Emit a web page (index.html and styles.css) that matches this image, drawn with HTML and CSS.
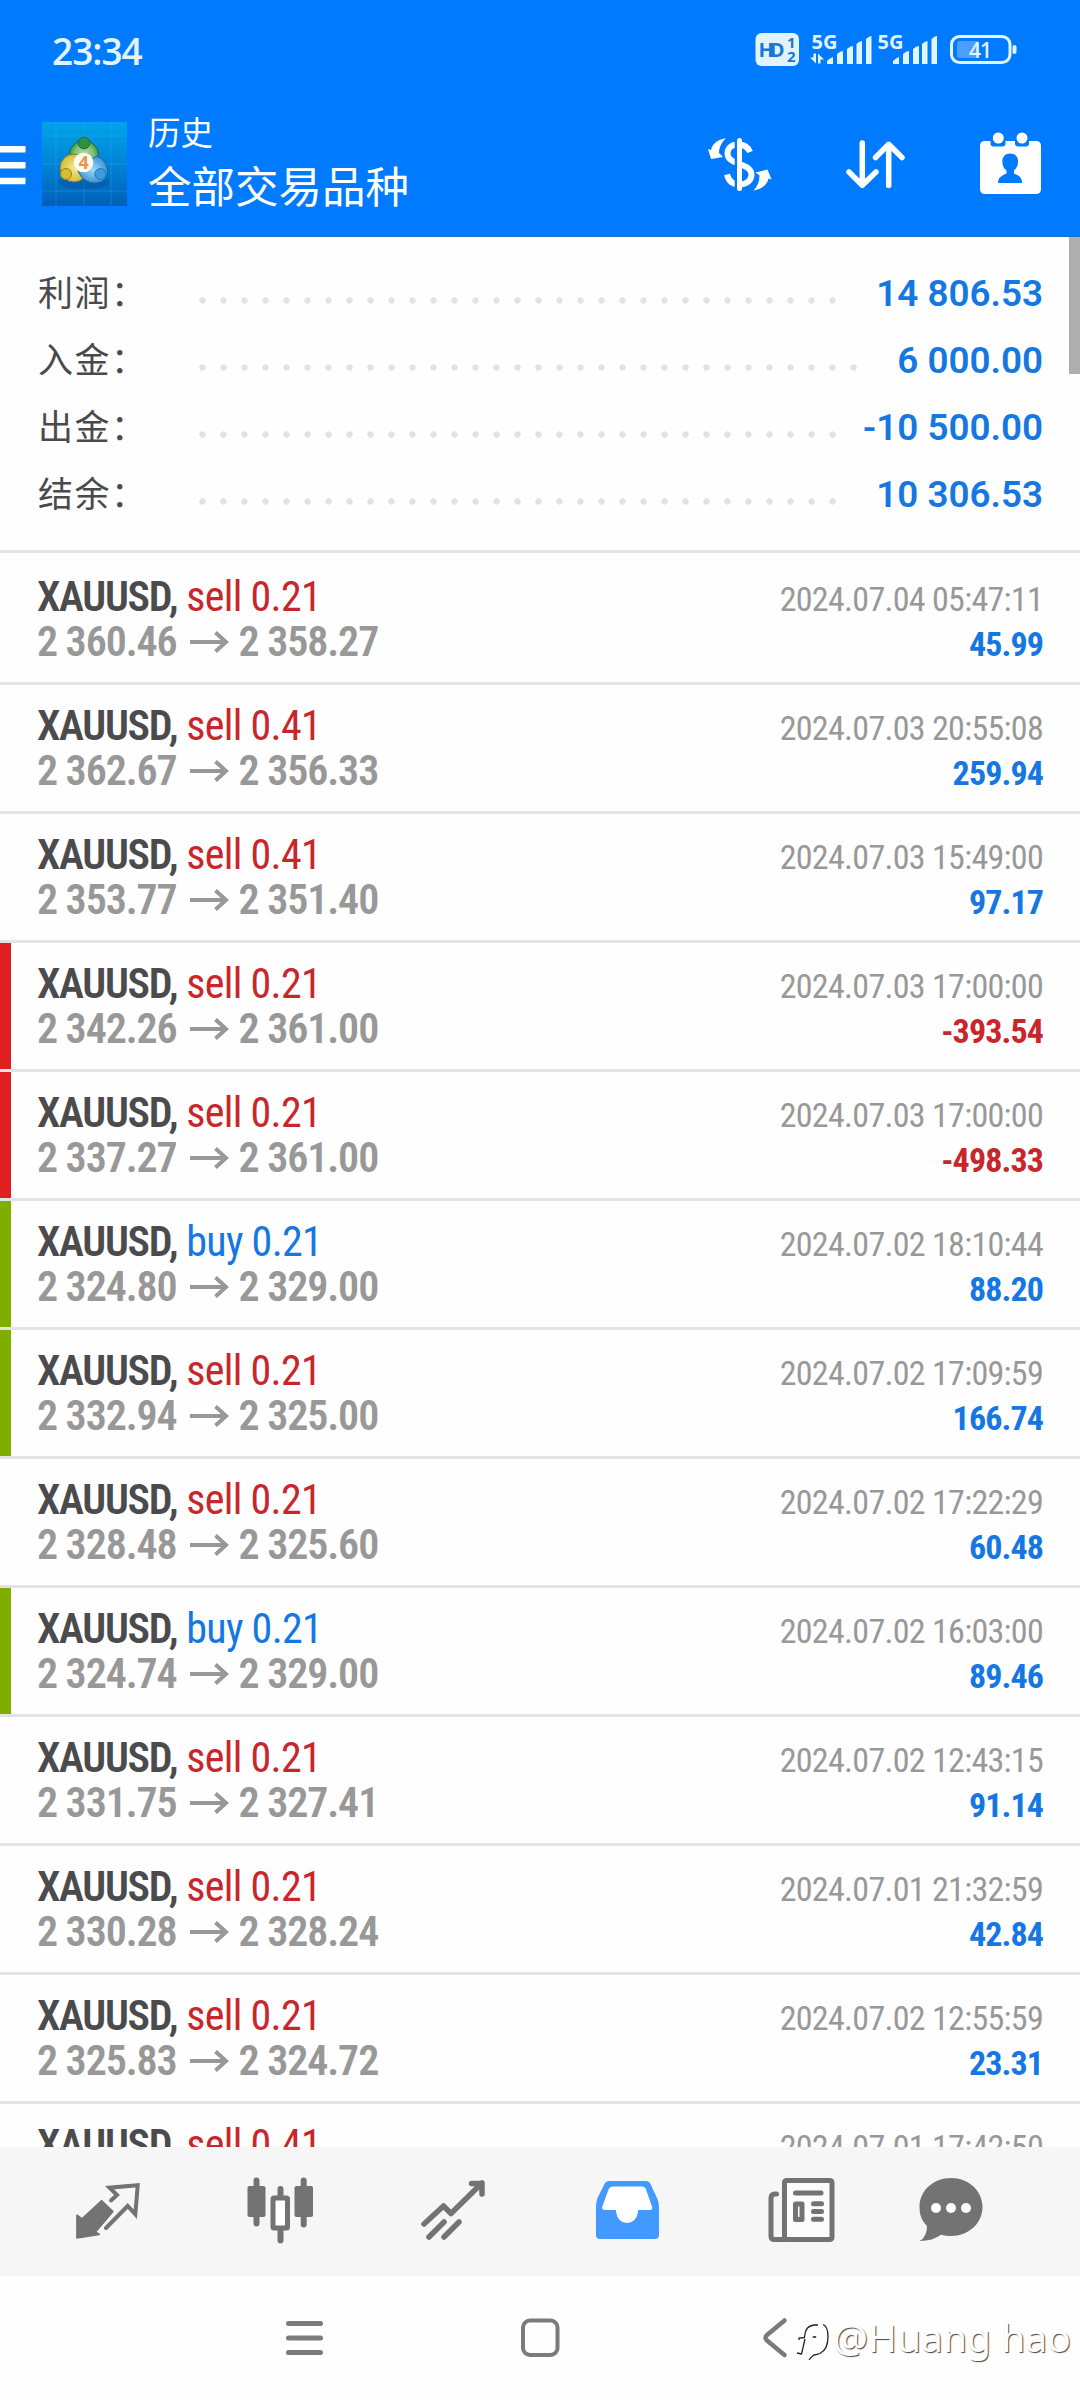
FILE: index.html
```html
<!DOCTYPE html>
<html lang="zh-CN">
<head>
<meta charset="utf-8">
<title>历史</title>
<link rel="stylesheet" href="styles.css">
</head>
<body>
<div class="screen">
  <header class="header">
    <div class="status">
      <span class="clock">23:34</span>
      <svg class="status-icons" viewBox="750 20 270 60" width="270" height="60">
        <rect x="755.5" y="33" width="43.5" height="33" rx="6" fill="#e2f2ff"/>
        <text x="758.500" y="56.500" class="hd" textLength="26">HD</text>
        <text x="787" y="48" class="hd-small">1</text>
        <text x="787" y="62" class="hd-small">2</text>
        <g fill="#e2f4ff">
          <text x="811.500" y="48.500" class="net" textLength="26">5G</text>
          <path d="M810 57.500h3.500V53.500h2.500v10zM818 63.500V53.500l6 6h-3.500v4z"/>
          <path d="M827 64v-3q3-3 6-4v7zM837 64V54q3-3 6-3v13zM847 64V49q3-3 6-3v18zM856.500 64V44q3-3 5.500-3v23zM866 64V39q3-3 5.500-3v28z"/>
          <text x="877.500" y="48.500" class="net" textLength="26">5G</text>
          <path d="M893 64v-3q3-3 6-4v7zM903 64V54q3-3 6-3v13zM913 64V49q3-3 6-3v18zM922 64V44q3-3 5.500-3v23zM931.500 64V39q3-3 5.500-3v28z"/>
          <rect x="1012.500" y="45" width="4" height="9" rx="2"/>
        </g>
        <rect x="951.500" y="36.500" width="58.500" height="26" rx="8" fill="none" stroke="#e2f4ff" stroke-width="3"/>
        <rect x="957" y="41" width="22" height="17" rx="3" fill="#4d9fff"/>
        <text x="969" y="58" class="batt">41</text>
      </svg>
    </div>
    <div class="appbar">
      <svg viewBox="0 122 42 84" width="42" height="84"><path d="M0 149.300h25.500M0 165.200h25.500M0 181h25.500" stroke="#fff" stroke-width="6.500"/></svg>
      <svg viewBox="42 122 85 84" width="85" height="84">
        <defs>
          <linearGradient id="bg" x1="0" y1="0" x2="0" y2="1"><stop offset="0" stop-color="#00a3e8"/><stop offset=".5" stop-color="#0084d6"/><stop offset="1" stop-color="#005fb8"/></linearGradient>
          <radialGradient id="green"><stop offset="0" stop-color="#b8e0a0"/><stop offset=".7" stop-color="#7cbc70"/><stop offset="1" stop-color="#3f9648"/></radialGradient>
          <radialGradient id="yellow"><stop offset="0" stop-color="#f4e88a"/><stop offset="1" stop-color="#d3bd38"/></radialGradient>
          <radialGradient id="blue"><stop offset="0" stop-color="#9fd8f8"/><stop offset="1" stop-color="#3a94d8"/></radialGradient>
        </defs>
        <rect x="42" y="122" width="85" height="84" fill="url(#bg)"/>
        <path d="M42 136h85M42 164h85M42 191h85M56 122v84M84 122v84M111 122v84" stroke="#48b6ee" stroke-opacity=".28" fill="none"/>
        <ellipse cx="84" cy="182" rx="26" ry="7" fill="#00407c" opacity=".3"/>
        <circle cx="84" cy="155" r="14.500" fill="url(#green)" stroke="#2c6a40"/>
        <circle cx="74" cy="168" r="14" fill="url(#yellow)" stroke="#7c7830"/>
        <path d="M97 156c6 2 11 9 10.500 17-1 8-8 10.500-14 10-9-1-15-7-16-16z" fill="url(#blue)" stroke="#205f9c"/>
        <circle cx="84" cy="143" r="5.800" fill="#2c9142" stroke="#1f6c35"/>
        <circle cx="66" cy="174" r="5.500" fill="#d8bd32" stroke="#9a8420"/>
        <circle cx="100.500" cy="174" r="5.500" fill="#3d9be0" stroke="#2272b8"/>
        <circle cx="83.500" cy="162.500" r="9.800" fill="#fbfbf8"/>
        <text x="78.500" y="169" class="logo-number">4</text>
      </svg>
      <div class="titles"><div class="title">历史</div><div class="subtitle">全部交易品种</div></div>
      <div class="actions">
        <svg viewBox="700 130 80 66" width="80" height="66">
          <path d="M750 151c-2-5-6-7.500-12-7.500-7 0-10.500 4-10.500 9 0 12 24 9 24 21 0 6-5 10-12 10s-11-4-12.500-10" fill="none" stroke="#fff" stroke-width="6"/>
          <path d="M738.200 136v56" stroke="#007aff" stroke-width="7"/><path d="M739.500 139.500v48" stroke="#fff" stroke-width="5" stroke-linecap="round"/>
          <path d="M726 137c-10 2-14 7-15 12l-3-1 3 10 12-2-4-4c0-6 3-11 7-15zM753.500 189.500c10-2 14-7 15-12l3 1-4-10-12 3 4 3c0 6-2 11-6 15z" fill="#fff"/>
        </svg>
        <svg viewBox="840 130 70 66" width="70" height="66"><path d="M862.300 142v41M849 171l13.300 13.200L876 171M888.700 184.500V144M875.500 156.500l13.200-13.200L902 156.500" fill="none" stroke="#fff" stroke-width="5.500" stroke-linecap="round" stroke-linejoin="round"/></svg>
        <svg viewBox="975 130 70 66" width="70" height="66">
          <path d="M985 140h5.500v2.500q0 3 3 3h9q3 0 3-3V140h9.500v2.500q0 3 3 3h8q3 0 3-3V140h7q5 0 5 5v43q0 5-5 5h-51q-5 0-5-5v-43q0-5 5-5z" fill="#fff"/>
          <circle cx="998.300" cy="137" r="5.500" fill="#fff"/><circle cx="1022" cy="137" r="5.500" fill="#fff"/>
          <path d="M1010.300 152.500c5 0 8 3.500 7.700 8 0 4-1.500 7-4 9v3c5 2 8 4 8 9.500h-24c0-5.500 4-7.500 8.500-9.500v-3c-3-2-4-5-4.200-9 0-4.500 3-8 8-8z" fill="#007aff"/>
        </svg>
      </div>
    </div>
  </header>

  <main class="content">
    <div class="scrollbar"></div>
    <section class="summary">
      <div class="total"><span class="label">利润：</span><i class="dots"></i><b>14 806.53</b></div>
      <div class="total"><span class="label">入金：</span><i class="dots dots-long"></i><b>6 000.00</b></div>
      <div class="total"><span class="label">出金：</span><i class="dots"></i><b>-10 500.00</b></div>
      <div class="total"><span class="label">结余：</span><i class="dots"></i><b>10 306.53</b></div>
    </section>
    <section class="deals">
      <div class="deal"><div><div class="order"><b>XAUUSD,</b> <span class="sell">sell 0.21</span></div><div class="price">2 360.46<svg class="arrow" viewBox="0 0 38 22"><path d="M0 11h36M25.500 1.500L36 11 25.500 20.500"/></svg>2 358.27</div></div><div class="result"><div class="time">2024.07.04 05:47:11</div><div class="profit">45.99</div></div></div>
      <div class="deal"><div><div class="order"><b>XAUUSD,</b> <span class="sell">sell 0.41</span></div><div class="price">2 362.67<svg class="arrow" viewBox="0 0 38 22"><path d="M0 11h36M25.500 1.500L36 11 25.500 20.500"/></svg>2 356.33</div></div><div class="result"><div class="time">2024.07.03 20:55:08</div><div class="profit">259.94</div></div></div>
      <div class="deal"><div><div class="order"><b>XAUUSD,</b> <span class="sell">sell 0.41</span></div><div class="price">2 353.77<svg class="arrow" viewBox="0 0 38 22"><path d="M0 11h36M25.500 1.500L36 11 25.500 20.500"/></svg>2 351.40</div></div><div class="result"><div class="time">2024.07.03 15:49:00</div><div class="profit">97.17</div></div></div>
      <div class="deal stopped"><div><div class="order"><b>XAUUSD,</b> <span class="sell">sell 0.21</span></div><div class="price">2 342.26<svg class="arrow" viewBox="0 0 38 22"><path d="M0 11h36M25.500 1.500L36 11 25.500 20.500"/></svg>2 361.00</div></div><div class="result"><div class="time">2024.07.03 17:00:00</div><div class="profit loss">-393.54</div></div></div>
      <div class="deal stopped"><div><div class="order"><b>XAUUSD,</b> <span class="sell">sell 0.21</span></div><div class="price">2 337.27<svg class="arrow" viewBox="0 0 38 22"><path d="M0 11h36M25.500 1.500L36 11 25.500 20.500"/></svg>2 361.00</div></div><div class="result"><div class="time">2024.07.03 17:00:00</div><div class="profit loss">-498.33</div></div></div>
      <div class="deal taken"><div><div class="order"><b>XAUUSD,</b> <span class="buy">buy 0.21</span></div><div class="price">2 324.80<svg class="arrow" viewBox="0 0 38 22"><path d="M0 11h36M25.500 1.500L36 11 25.500 20.500"/></svg>2 329.00</div></div><div class="result"><div class="time">2024.07.02 18:10:44</div><div class="profit">88.20</div></div></div>
      <div class="deal taken"><div><div class="order"><b>XAUUSD,</b> <span class="sell">sell 0.21</span></div><div class="price">2 332.94<svg class="arrow" viewBox="0 0 38 22"><path d="M0 11h36M25.500 1.500L36 11 25.500 20.500"/></svg>2 325.00</div></div><div class="result"><div class="time">2024.07.02 17:09:59</div><div class="profit">166.74</div></div></div>
      <div class="deal"><div><div class="order"><b>XAUUSD,</b> <span class="sell">sell 0.21</span></div><div class="price">2 328.48<svg class="arrow" viewBox="0 0 38 22"><path d="M0 11h36M25.500 1.500L36 11 25.500 20.500"/></svg>2 325.60</div></div><div class="result"><div class="time">2024.07.02 17:22:29</div><div class="profit">60.48</div></div></div>
      <div class="deal taken"><div><div class="order"><b>XAUUSD,</b> <span class="buy">buy 0.21</span></div><div class="price">2 324.74<svg class="arrow" viewBox="0 0 38 22"><path d="M0 11h36M25.500 1.500L36 11 25.500 20.500"/></svg>2 329.00</div></div><div class="result"><div class="time">2024.07.02 16:03:00</div><div class="profit">89.46</div></div></div>
      <div class="deal"><div><div class="order"><b>XAUUSD,</b> <span class="sell">sell 0.21</span></div><div class="price">2 331.75<svg class="arrow" viewBox="0 0 38 22"><path d="M0 11h36M25.500 1.500L36 11 25.500 20.500"/></svg>2 327.41</div></div><div class="result"><div class="time">2024.07.02 12:43:15</div><div class="profit">91.14</div></div></div>
      <div class="deal"><div><div class="order"><b>XAUUSD,</b> <span class="sell">sell 0.21</span></div><div class="price">2 330.28<svg class="arrow" viewBox="0 0 38 22"><path d="M0 11h36M25.500 1.500L36 11 25.500 20.500"/></svg>2 328.24</div></div><div class="result"><div class="time">2024.07.01 21:32:59</div><div class="profit">42.84</div></div></div>
      <div class="deal"><div><div class="order"><b>XAUUSD,</b> <span class="sell">sell 0.21</span></div><div class="price">2 325.83<svg class="arrow" viewBox="0 0 38 22"><path d="M0 11h36M25.500 1.500L36 11 25.500 20.500"/></svg>2 324.72</div></div><div class="result"><div class="time">2024.07.02 12:55:59</div><div class="profit">23.31</div></div></div>
      <div class="deal"><div><div class="order"><b>XAUUSD,</b> <span class="sell">sell 0.41</span></div></div><div class="result"><div class="time">2024.07.01 17:42:50</div></div></div>
    </section>
  </main>

  <nav class="tabs">
    <svg viewBox="70 2170 76 80" width="76" height="80">
      <path d="M101.600 2201l11 10.500-17.500 20.500 4 2.300-22 3.400V2215.500l5 3.500z" fill="#737373" stroke="#737373" stroke-width="2" stroke-linejoin="round"/>
      <path d="M111 2200.500l6-5.500-7.500-7.300 28.200-2.400-2.400 29-7.600-8.300-21.700 22" fill="none" stroke="#737373" stroke-width="4" stroke-linecap="round"/>
    </svg>
    <svg viewBox="243 2170 76 80" width="76" height="80">
      <path d="M256.500 2180.500v43M280.500 2189v51.500M303.700 2180.500v44" stroke="#737373" stroke-width="6" stroke-linecap="round"/>
      <rect x="247.500" y="2186" width="18" height="31" rx="2" fill="#737373"/><rect x="294.500" y="2186" width="18.500" height="31" rx="2" fill="#737373"/>
      <rect x="273" y="2198" width="14.500" height="30" rx="1" fill="#fff" stroke="#737373" stroke-width="5"/>
    </svg>
    <svg viewBox="416 2170 76 80" width="76" height="80"><path d="M424 2224l19.500-18 7.500 7.500L482 2183M471.500 2183.500H482V2194M429 2237l15-15M444 2237l15-15" fill="none" stroke="#737373" stroke-width="5.500" stroke-linecap="round" stroke-linejoin="round"/></svg>
    <svg viewBox="590 2170 76 80" width="76" height="80">
      <path d="M609 2181h37q3 0 4.500 3l6.500 14q2 4 2 9v28q0 4-4 4h-55q-4 0-4-4v-28q0-5 1.500-9l7-14q1.500-3 4.500-3z" fill="#429aff"/>
      <path d="M613 2186.500h29q3 0 4 3l6 17q1 3.500-2 3.500h-12v2q-2 11-11 11t-11-11v-2h-11q-4 0-2.500-4l6-16.500q1-3 4.500-3z" fill="#fff"/>
    </svg>
    <svg viewBox="764 2170 76 80" width="76" height="80">
      <g fill="none" stroke="#737373" stroke-width="5" stroke-linecap="round" stroke-linejoin="round">
        <path d="M784.500 2183q0-2.500 2.500-2.500h42.500q2.500 0 2.500 2.500v54q0 2.500-2.500 2.500H787q-2.500 0-2.500-2.500z" fill="#fcfcfc"/>
        <path d="M776.500 2194h-1.500q-4 0-4 4v38q0 3.500 3.500 3.500H788"/>
        <path d="M795.500 2193h25.500M813.500 2203.700h8M813.500 2211.500h8M813.500 2219.300h8M795.500 2204h6.500v15.500h-6.500z"/>
      </g>
    </svg>
    <svg viewBox="914 2170 76 80" width="76" height="80">
      <path d="M951 2178c18 0 31.500 13 31.500 29S969 2236 951 2236q-5 0-10-1.200-8 6.200-21.500 6.200 7.500-4 7.500-15c-5-5-7.500-11-7.500-19 0-16 13.500-29 31.500-29z" fill="#737373"/>
      <circle cx="936" cy="2208" r="5" fill="#fff"/><circle cx="951" cy="2208" r="5" fill="#fff"/><circle cx="966" cy="2208" r="5" fill="#fff"/>
    </svg>
  </nav>

  <footer class="system">
    <svg viewBox="280 2310 50 56" width="50" height="56"><path d="M288.500 2323.400h32M288.500 2338h32M288.500 2352.500h32" stroke="#7b7b7b" stroke-width="5" stroke-linecap="round"/></svg>
    <svg viewBox="515 2310 50 56" width="50" height="56"><rect x="523" y="2320.500" width="34.500" height="34.500" rx="7" fill="none" stroke="#7b7b7b" stroke-width="4"/></svg>
    <svg viewBox="750 2310 50 56" width="50" height="56"><path d="M784.500 2320.500l-17.500 14.500q-3 2.700 0 5.500l17.500 14.500" fill="none" stroke="#7b7b7b" stroke-width="4.500" stroke-linecap="round"/></svg>
  </footer>

  <div class="watermark">
    <svg viewBox="796 2314 38 50" width="38" height="50"><path d="M818 2327h-4q-8 1-9 9l-.5 3M799 2342v-2l6-.5M805 2341l-3.500 15-4.500-1M823 2326.500q5 2 5 12 0 13-8 17-3 1-6 1.500-3 2-5 5M812.700 2339h3.500" fill="none" stroke="#222" stroke-width="1.300"/></svg>
    <span>@Huang hao</span>
  </div>
</div>
</body>
</html>
```
FILE: styles.css
```css
* { box-sizing: border-box; }
body { margin: 0; background: #fff; font-family: Roboto, "Noto Sans CJK SC", sans-serif; }
svg { display: block; flex: none; }
.screen { position: relative; width: 1080px; height: 2400px; overflow: hidden; display: flex; flex-direction: column; background: #fefefe; }

.header { height: 237px; flex: none; background: #007aff; border-bottom: 2px solid #1a70c4; color: #fff; }
.status { height: 98px; display: flex; align-items: center; justify-content: space-between; padding: 2px 60px 0 52px; }
.clock { font: 600 37px "Open Sans", sans-serif; color: #e2f4ff; letter-spacing: -1px; }
.hd { font: 700 20px "Open Sans", sans-serif; fill: #1878d8; }
.hd-small { font: 700 15px "Open Sans", sans-serif; fill: #1878d8; }
.net { font: 700 20px "Open Sans", sans-serif; }
.batt { font: 600 21px "Open Sans", sans-serif; fill: #e2f4ff; letter-spacing: -1px; }
.logo-number { font: 700 18px "Open Sans", sans-serif; fill: #ee9440; }
.appbar { height: 132px; display: flex; align-items: center; }
.titles { margin: -12px 0 0 21px; font-family: "Noto Sans CJK SC", sans-serif; line-height: 54.5px; }
.title { font-size: 32.500px; }
.subtitle { font-size: 43.500px; }
.actions { margin-left: auto; padding-right: 35px; display: flex; }
.actions svg:nth-child(2) { margin: 0 65px 0 60px; }

.content { position: relative; height: 1910px; flex: none; overflow: hidden; }
.scrollbar { position: absolute; top: 0; right: 0; width: 11px; height: 137px; background: #aeaeae; }
.summary { height: 316px; padding: 20px 37px 0 38px; border-bottom: 3px solid #e3e3e3; }
.total { height: 67px; line-height: 67px; display: flex; align-items: baseline; }
.label { width: 154px; font: 35px/67px "Noto Sans CJK SC", sans-serif; letter-spacing: 1.500px; color: #4a4a4c; }
.dots { width: 651px; height: 7px; align-self: flex-start; margin-top: 40px; background: radial-gradient(circle at center, #e2e2e2 2.800px, transparent 3.600px) 0 0 / 21px 7px repeat-x; }
.dots-long { width: 672px; }
.total b { margin-left: auto; font-size: 36.800px; font-weight: 650; color: #1577e2; }

.deals { padding-top: 3px; }
.deal { height: 129px; padding: 18px 37px 0; border-bottom: 3px solid #e3e3e3; display: flex; justify-content: space-between; position: relative; line-height: 45px; font-stretch: 75%; }
.deal.stopped::before, .deal.taken::before { content: ""; position: absolute; left: 0; top: 0; bottom: 0; width: 11px; background: #e02020; }
.deal.taken::before { background: #80ae00; }
.order { font-size: 42px; letter-spacing: -.7px; color: #4b4b4e; }
.order b { letter-spacing: -1.300px; font-weight: 650; }
.sell { color: #c8262b; }
.buy { color: #1577e2; }
.price { display: flex; align-items: center; font-size: 42px; font-weight: 650; letter-spacing: -1.100px; color: #989898; }
.arrow { width: 38px; height: 22px; margin: 0 11px 0 13px; overflow: visible; fill: none; stroke: #989898; stroke-width: 4px; }
.result { padding-top: 3px; text-align: right; }
.time { font-size: 34px; letter-spacing: -.7px; color: #989898; }
.profit { font-size: 34px; font-weight: 680; letter-spacing: -.9px; color: #1577e2; }
.profit.loss { color: #c8262b; }

.tabs { height: 129px; flex: none; background: #f6f6f6; padding: 0 0 3px 22px; display: grid; grid-template-columns: 172px 173px 174px 174px 174px 126px; align-items: center; justify-items: center; }
.system { flex: 1; display: flex; gap: 185px; padding: 34px 0 0 280px; }
.watermark { position: absolute; left: 796px; top: 2312px; display: flex; align-items: center; color: #fff; font: 39px/50px "Noto Sans", sans-serif; text-shadow: 1px 1px 1px #444; white-space: nowrap; }
.watermark span { margin-left: -1px; }
```
